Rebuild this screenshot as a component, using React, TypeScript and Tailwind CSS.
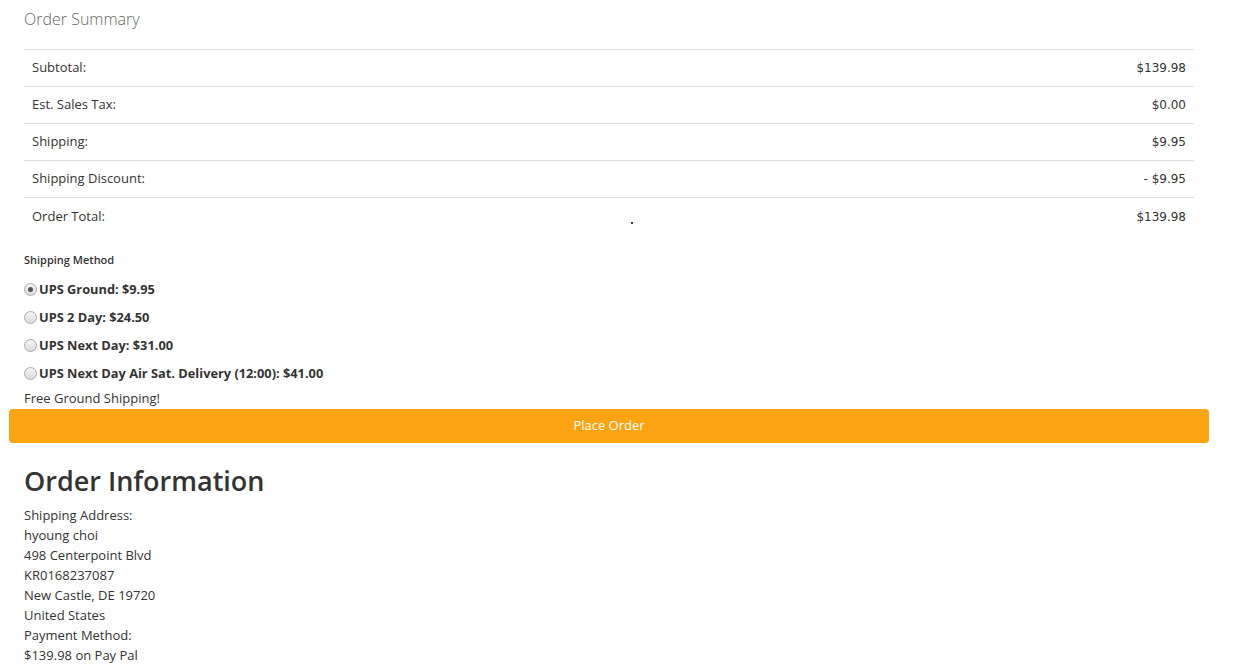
import React from 'react';

const rows = [
  { label: 'Subtotal:', value: '$139.98' },
  { label: 'Est. Sales Tax:', value: '$0.00' },
  { label: 'Shipping:', value: '$9.95' },
  { label: 'Shipping Discount:', value: '- $9.95' },
  { label: 'Order Total:', value: '$139.98' },
];

const methods = [
  { label: 'UPS Ground: $9.95', checked: true },
  { label: 'UPS 2 Day: $24.50', checked: false },
  { label: 'UPS Next Day: $31.00', checked: false },
  { label: 'UPS Next Day Air Sat. Delivery (12:00): $41.00', checked: false },
];

const address = [
  'Shipping Address:',
  'hyoung choi',
  '498 Centerpoint Blvd',
  'KR0168237087',
  'New Castle, DE 19720',
  'United States',
  'Payment Method:',
  '$139.98 on Pay Pal',
];

function Radio({ checked }: { checked: boolean }) {
  return (
    <span className="mr-[2px] inline-flex size-[13px] shrink-0 items-center justify-center rounded-full border border-[#a9a9a9] bg-gradient-to-b from-[#f4f4f4] to-[#dcdcdc]">
      {checked && <span className="size-[5px] rounded-full bg-[#555]" />}
    </span>
  );
}

export default function App() {
  return (
    <div className="relative min-h-[665px] bg-white text-[13px] text-[#333] [font-family:'Open_Sans',sans-serif]">
      <div className="px-6 pt-[7px]">
        <h2 className="text-[16px] font-light text-[#666]">Order Summary</h2>

        <div className="mt-[18px] w-[1170px] border-t border-[#ddd]">
          {rows.map((row) => (
            <div
              key={row.label}
              className="flex h-[37px] items-center justify-between border-b border-[#ddd] px-2 last:border-b-0"
            >
              <span>{row.label}</span>
              <span className="text-[12px] [font-family:Verdana,'DejaVu_Sans',sans-serif]">
                {row.value}
              </span>
            </div>
          ))}
        </div>

        <div className="mt-[17px] text-[11px] font-semibold">Shipping Method</div>
        <div className="mt-[7px] flex flex-col">
          {methods.map((m) => (
            <label key={m.label} className="flex h-[28px] items-center text-[12.8px] font-bold">
              <Radio checked={m.checked} />
              {m.label}
            </label>
          ))}
        </div>
        <div className="mt-[1px]">Free Ground Shipping!</div>
      </div>

      <div className="px-[9px] pr-[27px] pt-[1px]">
        <button className="flex h-[34px] w-full items-center justify-center rounded-[4px] bg-[#fca311] text-[13px] text-white">
          Place Order
        </button>
      </div>

      <div className="px-6 pt-[21px]">
        <h1 className="text-[27px] font-semibold leading-[34px] text-[#333]">Order Information</h1>
        <div className="mt-[7px] flex flex-col leading-[20px]">
          {address.map((line) => (
            <span key={line}>{line}</span>
          ))}
        </div>
      </div>

      <span className="absolute left-[631px] top-[222px] size-[2px] bg-[#333]" />
    </div>
  );
}
